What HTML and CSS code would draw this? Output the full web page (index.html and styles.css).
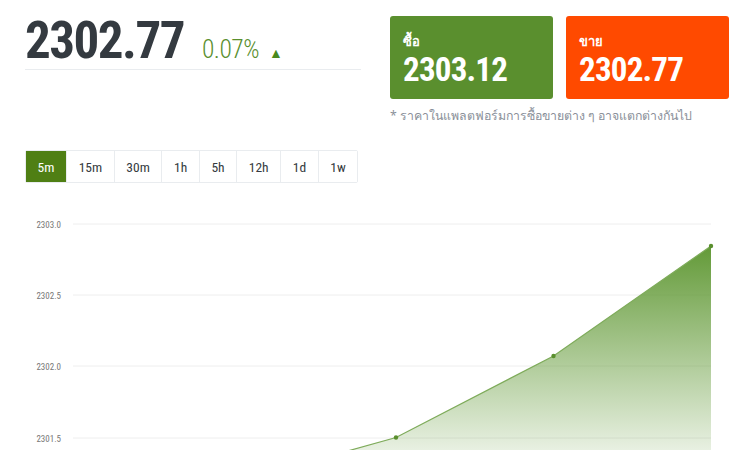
FILE: index.html
```html
<!DOCTYPE html>
<html lang="th">
<head>
    <meta charset="UTF-8">
    <meta name="viewport" content="width=device-width, initial-scale=1.0">
    <title>Gold Price</title>
    <link rel="stylesheet" href="styles.css">
</head>
<body>
    <div class="page">
        <div class="header">
            <div class="quote">
                <span class="price">2302.77</span>
                <span class="change">0.07%</span>
                <span class="arrow">&#9650;</span>
            </div>
            <div class="side">
                <div class="boxes">
                    <div class="box buy">
                        <div class="box-label">ซื้อ</div>
                        <div class="box-price">2303.12</div>
                    </div>
                    <div class="box sell">
                        <div class="box-label">ขาย</div>
                        <div class="box-price">2302.77</div>
                    </div>
                </div>
                <div class="note">* ราคาในแพลตฟอร์มการซื้อขายต่าง ๆ อาจแตกต่างกันไป</div>
            </div>
        </div>

        <div class="tabs">
            <button class="tab active">5m</button>
            <button class="tab">15m</button>
            <button class="tab">30m</button>
            <button class="tab">1h</button>
            <button class="tab">5h</button>
            <button class="tab">12h</button>
            <button class="tab">1d</button>
            <button class="tab">1w</button>
        </div>

        <div class="chart">
            <svg width="750" height="250" viewBox="0 200 750 250">
                <defs>
                    <linearGradient id="areaFill" gradientUnits="userSpaceOnUse" x1="0" y1="245" x2="0" y2="475">
                        <stop offset="0" stop-color="#639a38"/>
                        <stop offset="1" stop-color="#639a38" stop-opacity="0.04"/>
                    </linearGradient>
                </defs>
                <g class="grid">
                    <line x1="73" y1="223" x2="711" y2="223"/>
                    <line x1="73" y1="294" x2="711" y2="294"/>
                    <line x1="73" y1="365" x2="711" y2="365"/>
                    <line x1="73" y1="437" x2="711" y2="437"/>
                </g>
                <g class="axis">
                    <text x="61" y="227">2303.0</text>
                    <text x="61" y="298">2302.5</text>
                    <text x="61" y="369">2302.0</text>
                    <text x="61" y="441">2301.5</text>
                </g>
                <path class="area" d="M240 480 L396 436.5 L553.5 355 L711 245 L711 560 L240 560 Z"/>
                <path class="line" d="M240 480 L396 436.5 L553.5 355 L711 245"/>
                <g class="dots">
                    <circle cx="396" cy="436.5" r="2.2"/>
                    <circle cx="553.5" cy="355" r="2.2"/>
                    <circle cx="711" cy="245" r="2.2"/>
                </g>
            </svg>
        </div>
    </div>
</body>
</html>
```

FILE: styles.css
```css
body {
    margin: 0;
    padding: 0;
    background-color: white;
    font-family: Roboto, "Noto Sans", sans-serif;
    color: #343a40;
}
.page {
    width: 750px;
    height: 450px;
    overflow: hidden;
}
.header {
    display: flex;
    padding: 16px 0 0 25px;
}
.quote {
    width: 336px;
    height: 53px;
    border-bottom: 1px solid #e9ecef;
    display: flex;
    align-items: baseline;
    white-space: nowrap;
}
.price {
    font-size: 51px;
    font-weight: 700;
    font-stretch: condensed;
    letter-spacing: -1.5px;
    line-height: 50px;
    color: #343a40;
}
.change {
    margin-left: 18px;
    font-size: 25.5px;
    font-weight: 300;
    font-stretch: condensed;
    letter-spacing: -0.5px;
    color: #5a8f2e;
}
.arrow {
    margin-left: 10px;
    font-size: 14px;
    color: #4a8a1e;
}
.side {
    margin-left: 29px;
}
.boxes {
    display: flex;
    gap: 13px;
}
.box {
    width: 163px;
    height: 83px;
    box-sizing: border-box;
    padding: 16px 0 0 13px;
    border-radius: 3px;
    color: white;
}
.buy {
    background-color: #5a8f2e;
}
.sell {
    background-color: #ff4a00;
}
.box-label {
    font-family: "Noto Sans", sans-serif;
    font-size: 13px;
    font-weight: 700;
    line-height: 19px;
}
.box-price {
    margin-top: 3px;
    font-size: 33px;
    font-weight: 700;
    font-stretch: condensed;
    letter-spacing: -0.8px;
    line-height: 32px;
}
.note {
    margin-top: 7px;
    font-family: "Noto Sans", sans-serif;
    font-size: 12.3px;
    color: #8a9099;
    white-space: nowrap;
}
.tabs {
    display: flex;
    margin: 25px 0 0 25px;
    width: fit-content;
    border: 1px solid #e9ecef;
    border-radius: 2px;
}
.tab {
    height: 31px;
    padding: 0 11.6px;
    border: none;
    border-left: 1px solid #e9ecef;
    background-color: white;
    font-family: Roboto, sans-serif;
    font-size: 13.5px;
    font-stretch: condensed;
    color: #343a40;
}
.tab:first-child {
    border-left: none;
}
.tab.active {
    background-color: #4f7f14;
    color: white;
}
.chart {
    margin-top: 18px;
}
.chart svg {
    display: block;
}
.grid line {
    stroke: #eeeeee;
    stroke-width: 1;
}
.axis text {
    font-family: Roboto, sans-serif;
    font-size: 9px;
    font-stretch: condensed;
    fill: #777777;
    text-anchor: end;
}
.area {
    fill: url(#areaFill);
}
.line {
    fill: none;
    stroke: #7eab5a;
    stroke-width: 1.2;
}
.dots circle {
    fill: #5a8f2e;
}
```
